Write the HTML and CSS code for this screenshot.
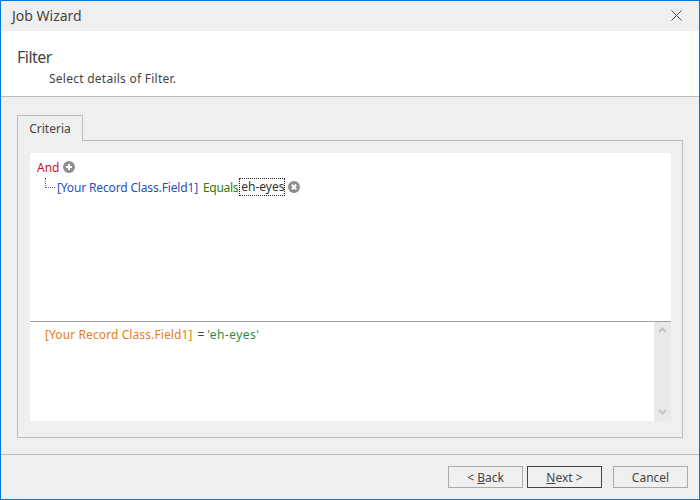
FILE: index.html
```html
<!DOCTYPE html>
<html lang="en">
<head>
    <meta charset="UTF-8">
    <title>Job Wizard</title>
    <link rel="stylesheet" href="styles.css">
</head>
<body>
    <div class="window">
        <div class="titlebar">
            <span class="title">Job Wizard</span>
            <svg class="close" width="11" height="11" viewBox="0 0 11 11">
                <path d="M0.5 0.5L10.5 10.5M10.5 0.5L0.5 10.5" stroke="#444" stroke-width="1" fill="none"/>
            </svg>
        </div>
        <div class="header">
            <div class="header-title">Filter</div>
            <div class="header-sub">Select details of Filter.</div>
        </div>
        <div class="content">
            <div class="tab">Criteria</div>
            <div class="tab-panel">
                <div class="editor">
                    <div class="tree">
                        <div class="tree-row">
                            <span class="c-and">And</span>
                            <svg class="round-btn" width="12" height="12" viewBox="0 0 12 12">
                                <circle cx="6" cy="6" r="6" fill="#8f8f8f"/>
                                <path d="M6 3V9M3 6H9" stroke="#fff" stroke-width="2"/>
                            </svg>
                        </div>
                        <div class="tree-row child">
                            <span class="connector"></span>
                            <span class="c-field">[Your Record Class.Field1]</span>
                            <span class="c-op">Equals</span>
                            <span class="c-value">eh-eyes</span>
                            <svg class="round-btn remove" width="12" height="12" viewBox="0 0 12 12">
                                <circle cx="6" cy="6" r="6" fill="#8f8f8f"/>
                                <path d="M3.800 3.800L8.200 8.200M8.200 3.800L3.800 8.200" stroke="#fff" stroke-width="2"/>
                            </svg>
                        </div>
                    </div>
                    <div class="preview">
                        <div class="preview-text"><span class="p-field">[Your Record Class.Field1]</span><span class="p-op">=</span><span class="p-value">'eh-eyes'</span></div>
                        <div class="scrollbar">
                            <svg width="9" height="6" viewBox="0 0 9 6"><path d="M1 5L4.500 1.500L8 5" stroke="#c4c4c4" stroke-width="2" fill="none"/></svg>
                            <svg width="9" height="6" viewBox="0 0 9 6"><path d="M1 1L4.500 4.500L8 1" stroke="#c4c4c4" stroke-width="2" fill="none"/></svg>
                        </div>
                    </div>
                </div>
            </div>
        </div>
        <div class="footer">
            <button class="btn back">&lt; <u>B</u>ack</button>
            <button class="btn next"><u>N</u>ext &gt;</button>
            <button class="btn cancel">Cancel</button>
        </div>
    </div>
</body>
</html>
```
FILE: styles.css
```css
html, body {
    margin: 0;
    padding: 0;
    height: 100%;
    overflow: hidden;
}
body {
    font-family: "Noto Sans", "Open Sans", sans-serif;
    font-size: 12px;
    color: #444;
}
.window {
    box-sizing: border-box;
    width: 700px;
    height: 500px;
    border: 1px solid #0078d7;
    background: #efefef;
    display: flex;
    flex-direction: column;
}
/* title bar */
.titlebar {
    height: 30px;
    box-sizing: border-box;
    display: flex;
    align-items: center;
    justify-content: space-between;
    padding: 0 17px 2px 11px;
}
.title {
    font-size: 14px;
}
/* white header */
.header {
    height: 66px;
    box-sizing: border-box;
    background: #fff;
    border-bottom: 1px solid #bcbcbc;
    padding: 15px 0 0 16px;
}
.header-title {
    font-size: 16px;
    line-height: 22px;
    letter-spacing: -0.5px;
}
.header-sub {
    margin: 2px 0 0 32px;
    line-height: 17px;
    letter-spacing: 0.25px;
}
/* tab area */
.content {
    height: 358px;
    box-sizing: border-box;
    padding: 18px 16px 0;
    display: flex;
    flex-direction: column;
    border-bottom: 1px solid #bcbcbc;
}
.tab {
    width: 66px;
    height: 26px;
    box-sizing: border-box;
    border: 1px solid #bcbcbc;
    border-bottom: 0;
    text-align: center;
    line-height: 25px;
    margin-bottom: -1px;
    position: relative;
    background: #efefef;
}
.tab-panel {
    height: 298px;
    box-sizing: border-box;
    border: 1px solid #bcbcbc;
    padding: 12px 11px 15px 12px;
}
.editor {
    background: #fff;
    height: 268px;
    display: flex;
    flex-direction: column;
}
.tree {
    height: 169px;
    box-sizing: border-box;
    border-bottom: 1px solid #a0a0a0;
    padding: 5px 0 0 7px;
}
.tree-row {
    display: flex;
    align-items: center;
    height: 18px;
    gap: 4px;
}
.tree-row.child {
    margin-top: 2px;
}
.connector {
    width: 10px;
    height: 10px;
    margin: -9px -2px 0 8px;
    border-left: 1px dotted #666;
    border-bottom: 1px dotted #666;
    box-sizing: border-box;
}
.c-and { color: #c8102e; }
.c-field {
    color: #2a4fb8;
    letter-spacing: -0.15px;
}
.c-op {
    color: #2e7d12;
    letter-spacing: -0.3px;
    margin-left: 1px;
}
.c-value {
    border: 1px dotted #222;
    margin-left: -3px;
    padding: 0 0 0 1px;
    line-height: 16px;
    color: #333;
}
.remove {
    margin-left: -1px;
}
/* preview under the tree */
.preview {
    flex: 1;
    display: flex;
    justify-content: space-between;
}
.preview-text {
    padding: 4px 0 0 15px;
}
.p-field {
    color: #e67e14;
    letter-spacing: 0.1px;
}
.p-op {
    margin: 0 3px 0 5px;
}
.p-value {
    color: #2e8b3a;
    letter-spacing: 0.45px;
}
.scrollbar {
    width: 17px;
    background: #e9e9e9;
    display: flex;
    flex-direction: column;
    justify-content: space-between;
    align-items: center;
    padding: 5px 0 6px;
    box-sizing: border-box;
}
.scrollbar svg { display: block; }
/* bottom buttons */
.footer {
    flex: 1;
    display: flex;
    padding: 11px 11px 0 0;
    justify-content: flex-end;
    align-items: flex-start;
}
.btn {
    width: 75px;
    height: 22px;
    padding: 0;
    background: #efefef;
    border: 1px solid #ababab;
    font: inherit;
    color: #444;
}
.next {
    border-color: #444;
    margin: 0 11px 0 4px;
}
```
